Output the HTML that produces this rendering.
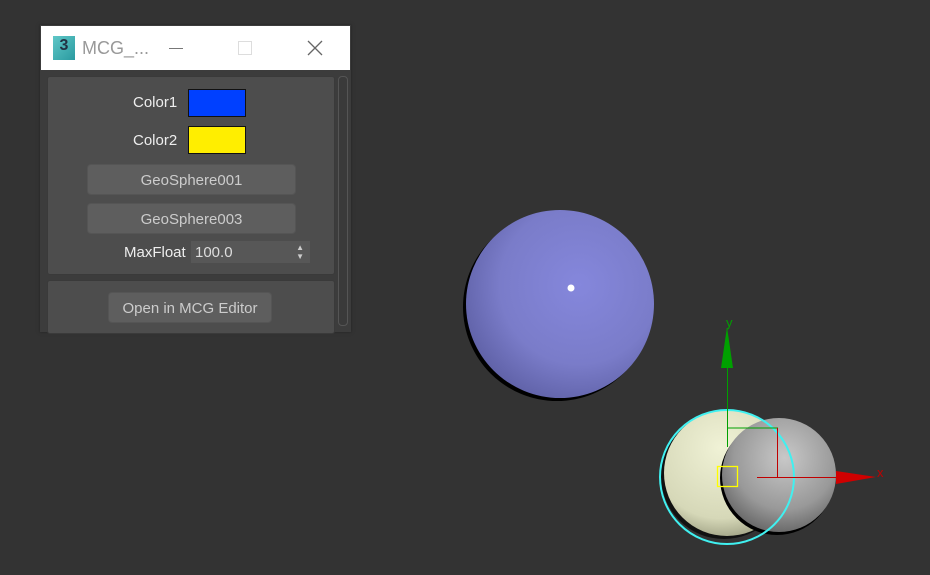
<!DOCTYPE html><html><head><style>
body{margin:0;width:930px;height:575px;background:#333333;overflow:hidden;font-family:"Liberation Sans",sans-serif;position:relative}
.win{position:absolute;left:40px;top:25px;width:311px;height:307px;background:#3c3c3c;box-shadow:0 0 3px #222}
.tb{position:absolute;left:1px;top:1px;width:309px;height:44px;background:#fff}
.p{position:absolute;background:#4d4d4d;border:1px solid #3a3a3a;border-radius:3px}
.lbl{position:absolute;color:#eee;font-size:15px}
.btn{position:absolute;background:#5e5e5e;border:1px solid #555;border-radius:4px;color:#ccc;font-size:15px;text-align:center}
</style></head><body>
<div class="win">
 <div class="tb">
  <div style="position:absolute;left:12px;top:10px;width:22px;height:24px;background:linear-gradient(135deg,#5fc7c7,#2a9aa0);color:#234;font-weight:bold;font-size:16px;text-align:center;line-height:20px">3</div>
  <div style="position:absolute;left:41px;top:12px;font-size:18px;color:#999">MCG_...</div>
  <div style="position:absolute;left:128px;top:22px;width:14px;height:1px;background:#777"></div>
  <div style="position:absolute;left:197px;top:15px;width:12px;height:12px;border:1px solid #ddd"></div>
  <svg style="position:absolute;left:266px;top:14px" width="16" height="16"><path d="M1 1L15 15M15 1L1 15" stroke="#666" stroke-width="1.3"/></svg>
 </div>
 <div class="p" style="left:7px;top:51px;width:286px;height:197px"></div>
 <div class="p" style="left:7px;top:255px;width:286px;height:52px"></div>
 <div style="position:absolute;left:298px;top:51px;width:8px;height:248px;border:1px solid #555;border-radius:4px;background:#3a3a3a"></div>
 <div class="lbl" style="left:93px;top:69px">Color1</div>
 <div style="position:absolute;left:148px;top:64px;width:56px;height:26px;background:#0040ff;border:1px solid #111"></div>
 <div class="lbl" style="left:93px;top:107px">Color2</div>
 <div style="position:absolute;left:148px;top:101px;width:56px;height:26px;background:#ffee00;border:1px solid #111"></div>
 <div class="btn" style="left:47px;top:139px;width:207px;height:29px;line-height:31px">GeoSphere001</div>
 <div class="btn" style="left:47px;top:178px;width:207px;height:29px;line-height:31px">GeoSphere003</div>
 <div class="lbl" style="left:84px;top:219px">MaxFloat</div>
 <div style="position:absolute;left:151px;top:216px;width:119px;height:22px;background:#575757;color:#ddd;font-size:15px;line-height:24px;padding-left:4px;box-sizing:border-box">100.0<span style="position:absolute;right:6px;top:0;font-size:8px;line-height:9px;color:#ccc;padding-top:2px">▲<br>▼</span></div>
 <div class="btn" style="left:68px;top:267px;width:162px;height:29px;line-height:31px">Open in MCG Editor</div>
</div>
<svg style="position:absolute;left:0;top:0" width="930" height="575">
 <defs>
  <radialGradient id="b" cx="0.6" cy="0.4" r="0.7"><stop offset="0" stop-color="#8587dc"/><stop offset="0.6" stop-color="#7a7cc9"/><stop offset="1" stop-color="#5a5ca0"/></radialGradient>
  <radialGradient id="y" cx="0.45" cy="0.3" r="0.8"><stop offset="0" stop-color="#f0f2d6"/><stop offset="0.7" stop-color="#d6d8b8"/><stop offset="1" stop-color="#8a8c70"/></radialGradient>
  <radialGradient id="g" cx="0.55" cy="0.35" r="0.75"><stop offset="0" stop-color="#c8c8c8"/><stop offset="0.6" stop-color="#999"/><stop offset="1" stop-color="#555"/></radialGradient>
 </defs>
 <circle cx="557" cy="307" r="94" fill="#000"/>
 <circle cx="560" cy="304" r="94" fill="url(#b)"/>
 <circle cx="571" cy="288" r="3.5" fill="#fff"/>
 <circle cx="724" cy="476" r="63" fill="#111"/>
 <circle cx="727" cy="473" r="63" fill="url(#y)"/>
 <circle cx="777" cy="478" r="57" fill="#000"/>
 <circle cx="779" cy="475" r="57" fill="url(#g)"/>
 <circle cx="727" cy="477" r="67" fill="none" stroke="#40f0f0" stroke-width="2"/>
 <line x1="727.5" y1="368" x2="727.5" y2="447" stroke="#00a000"/>
 <path d="M727 327L721 368H733Z" fill="#00a000"/>
 <text x="726" y="327" fill="#00a000" font-size="13" font-family="Liberation Sans,sans-serif">y</text>
 <path d="M727.5 428H777.5V477" fill="none" stroke="#00a000"/>
 <path d="M777.5 428V477" stroke="#c00000"/>
 <line x1="757" y1="477.5" x2="836" y2="477.5" stroke="#c00000"/>
 <path d="M836 471L876 477L836 484Z" fill="#d00000"/>
 <text x="877" y="477" fill="#c00000" font-size="13" font-family="Liberation Sans,sans-serif">x</text>
 <rect x="717.5" y="466.5" width="20" height="20" fill="none" stroke="#ffff00" stroke-width="1.3"/>
</svg>
</body></html>
